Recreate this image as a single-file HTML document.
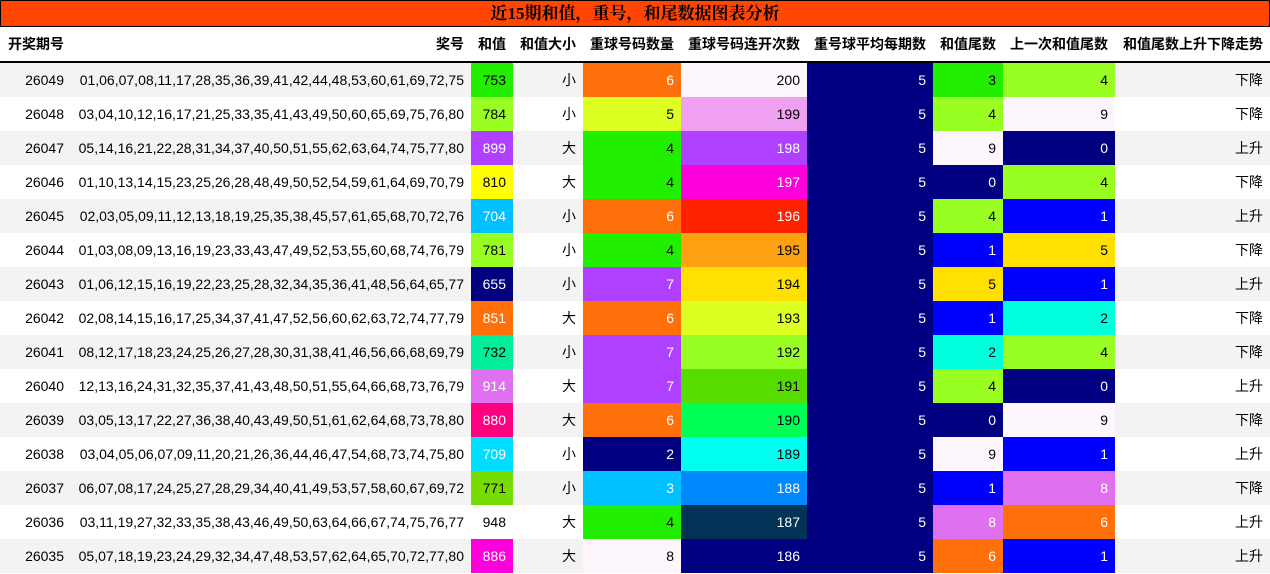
<!DOCTYPE html>
<html><head><meta charset="utf-8"><style>
body{margin:0;width:1270px;height:574px;overflow:hidden;background:#fff;font-family:"Liberation Sans","Noto Sans CJK SC",sans-serif;}
.t{position:absolute;left:0;top:0;width:1268px;height:25px;background:#ff4500;border:1px solid #000;text-align:center;font:bold 17px/25px "Liberation Serif","Noto Serif CJK SC",serif;}
table{position:absolute;left:0;top:27px;border-collapse:collapse;font-size:14px;}
th{height:34px;font-weight:bold;padding:0 7px 0 0;text-align:right;border-bottom:2px solid #000;white-space:nowrap;}
td{height:34px;padding:0 7px 0 0;text-align:right;white-space:nowrap;}
tr:nth-child(odd) td{background:#f3f3f3}
tr:nth-child(even) td{background:#fff}
td.w{color:#fff}
</style></head><body>
<div class="t">近15期和值，重号，和尾数据图表分析</div>
<table>
<colgroup><col style="width:71px"><col style="width:400px"><col style="width:42px"><col style="width:70px"><col style="width:98px"><col style="width:126px"><col style="width:126px"><col style="width:70px"><col style="width:112px"><col style="width:155px"></colgroup>
<thead><tr><th style="text-align:left;padding-left:8px">开奖期号</th><th>奖号</th><th>和值</th><th>和值大小</th><th>重球号码数量</th><th>重球号码连开次数</th><th>重号球平均每期数</th><th>和值尾数</th><th>上一次和值尾数</th><th>和值尾数上升下降走势</th></tr></thead>
<tbody>
<tr><td>26049</td><td>01,06,07,08,11,17,28,35,36,39,41,42,44,48,53,60,61,69,72,75</td><td style="background:#22ee00">753</td><td>小</td><td class="w" style="background:#ff6f0a">6</td><td style="background:#fdf6fd">200</td><td class="w" style="background:#000080">5</td><td style="background:#22ee00">3</td><td style="background:#99ff22">4</td><td>下降</td></tr>
<tr><td>26048</td><td>03,04,10,12,16,17,21,25,33,35,41,43,49,50,60,65,69,75,76,80</td><td style="background:#99ff22">784</td><td>小</td><td style="background:#ddff22">5</td><td style="background:#f0a0f0">199</td><td class="w" style="background:#000080">5</td><td style="background:#99ff22">4</td><td style="background:#fdf6fd">9</td><td>下降</td></tr>
<tr><td>26047</td><td>05,14,16,21,22,28,31,34,37,40,50,51,55,62,63,64,74,75,77,80</td><td class="w" style="background:#b040ff">899</td><td>大</td><td style="background:#22ee00">4</td><td class="w" style="background:#b040ff">198</td><td class="w" style="background:#000080">5</td><td style="background:#fdf6fd">9</td><td class="w" style="background:#000080">0</td><td>上升</td></tr>
<tr><td>26046</td><td>01,10,13,14,15,23,25,26,28,48,49,50,52,54,59,61,64,69,70,79</td><td style="background:#ffff00">810</td><td>大</td><td style="background:#22ee00">4</td><td class="w" style="background:#ff00dd">197</td><td class="w" style="background:#000080">5</td><td class="w" style="background:#000080">0</td><td style="background:#99ff22">4</td><td>下降</td></tr>
<tr><td>26045</td><td>02,03,05,09,11,12,13,18,19,25,35,38,45,57,61,65,68,70,72,76</td><td class="w" style="background:#00c0ff">704</td><td>小</td><td class="w" style="background:#ff6f0a">6</td><td class="w" style="background:#ff2200">196</td><td class="w" style="background:#000080">5</td><td style="background:#99ff22">4</td><td class="w" style="background:#0000ff">1</td><td>上升</td></tr>
<tr><td>26044</td><td>01,03,08,09,13,16,19,23,33,43,47,49,52,53,55,60,68,74,76,79</td><td style="background:#99ff22">781</td><td>小</td><td style="background:#22ee00">4</td><td style="background:#ffa010">195</td><td class="w" style="background:#000080">5</td><td class="w" style="background:#0000ff">1</td><td style="background:#ffe000">5</td><td>下降</td></tr>
<tr><td>26043</td><td>01,06,12,15,16,19,22,23,25,28,32,34,35,36,41,48,56,64,65,77</td><td class="w" style="background:#000080">655</td><td>小</td><td class="w" style="background:#b040ff">7</td><td style="background:#ffe000">194</td><td class="w" style="background:#000080">5</td><td style="background:#ffe000">5</td><td class="w" style="background:#0000ff">1</td><td>上升</td></tr>
<tr><td>26042</td><td>02,08,14,15,16,17,25,34,37,41,47,52,56,60,62,63,72,74,77,79</td><td class="w" style="background:#ff6f0a">851</td><td>大</td><td class="w" style="background:#ff6f0a">6</td><td style="background:#ddff22">193</td><td class="w" style="background:#000080">5</td><td class="w" style="background:#0000ff">1</td><td style="background:#00ffdd">2</td><td>下降</td></tr>
<tr><td>26041</td><td>08,12,17,18,23,24,25,26,27,28,30,31,38,41,46,56,66,68,69,79</td><td style="background:#00ee99">732</td><td>小</td><td class="w" style="background:#b040ff">7</td><td style="background:#99ff22">192</td><td class="w" style="background:#000080">5</td><td style="background:#00ffdd">2</td><td style="background:#99ff22">4</td><td>下降</td></tr>
<tr><td>26040</td><td>12,13,16,24,31,32,35,37,41,43,48,50,51,55,64,66,68,73,76,79</td><td class="w" style="background:#e070f0">914</td><td>大</td><td class="w" style="background:#b040ff">7</td><td style="background:#55dd00">191</td><td class="w" style="background:#000080">5</td><td style="background:#99ff22">4</td><td class="w" style="background:#000080">0</td><td>上升</td></tr>
<tr><td>26039</td><td>03,05,13,17,22,27,36,38,40,43,49,50,51,61,62,64,68,73,78,80</td><td class="w" style="background:#ff0080">880</td><td>大</td><td class="w" style="background:#ff6f0a">6</td><td style="background:#00ff55">190</td><td class="w" style="background:#000080">5</td><td class="w" style="background:#000080">0</td><td style="background:#fdf6fd">9</td><td>下降</td></tr>
<tr><td>26038</td><td>03,04,05,06,07,09,11,20,21,26,36,44,46,47,54,68,73,74,75,80</td><td class="w" style="background:#00ddff">709</td><td>小</td><td class="w" style="background:#000080">2</td><td style="background:#00ffee">189</td><td class="w" style="background:#000080">5</td><td style="background:#fdf6fd">9</td><td class="w" style="background:#0000ff">1</td><td>上升</td></tr>
<tr><td>26037</td><td>06,07,08,17,24,25,27,28,29,34,40,41,49,53,57,58,60,67,69,72</td><td style="background:#77dd00">771</td><td>小</td><td class="w" style="background:#00c0ff">3</td><td class="w" style="background:#0088ff">188</td><td class="w" style="background:#000080">5</td><td class="w" style="background:#0000ff">1</td><td class="w" style="background:#e070f0">8</td><td>下降</td></tr>
<tr><td>26036</td><td>03,11,19,27,32,33,35,38,43,46,49,50,63,64,66,67,74,75,76,77</td><td style="background:#fff">948</td><td>大</td><td style="background:#22ee00">4</td><td class="w" style="background:#003355">187</td><td class="w" style="background:#000080">5</td><td class="w" style="background:#e070f0">8</td><td class="w" style="background:#ff6f0a">6</td><td>上升</td></tr>
<tr><td>26035</td><td>05,07,18,19,23,24,29,32,34,47,48,53,57,62,64,65,70,72,77,80</td><td class="w" style="background:#ff00dd">886</td><td>大</td><td style="background:#fdf6fd">8</td><td class="w" style="background:#000080">186</td><td class="w" style="background:#000080">5</td><td class="w" style="background:#ff6f0a">6</td><td class="w" style="background:#0000ff">1</td><td>上升</td></tr>
</tbody></table>
</body></html>
